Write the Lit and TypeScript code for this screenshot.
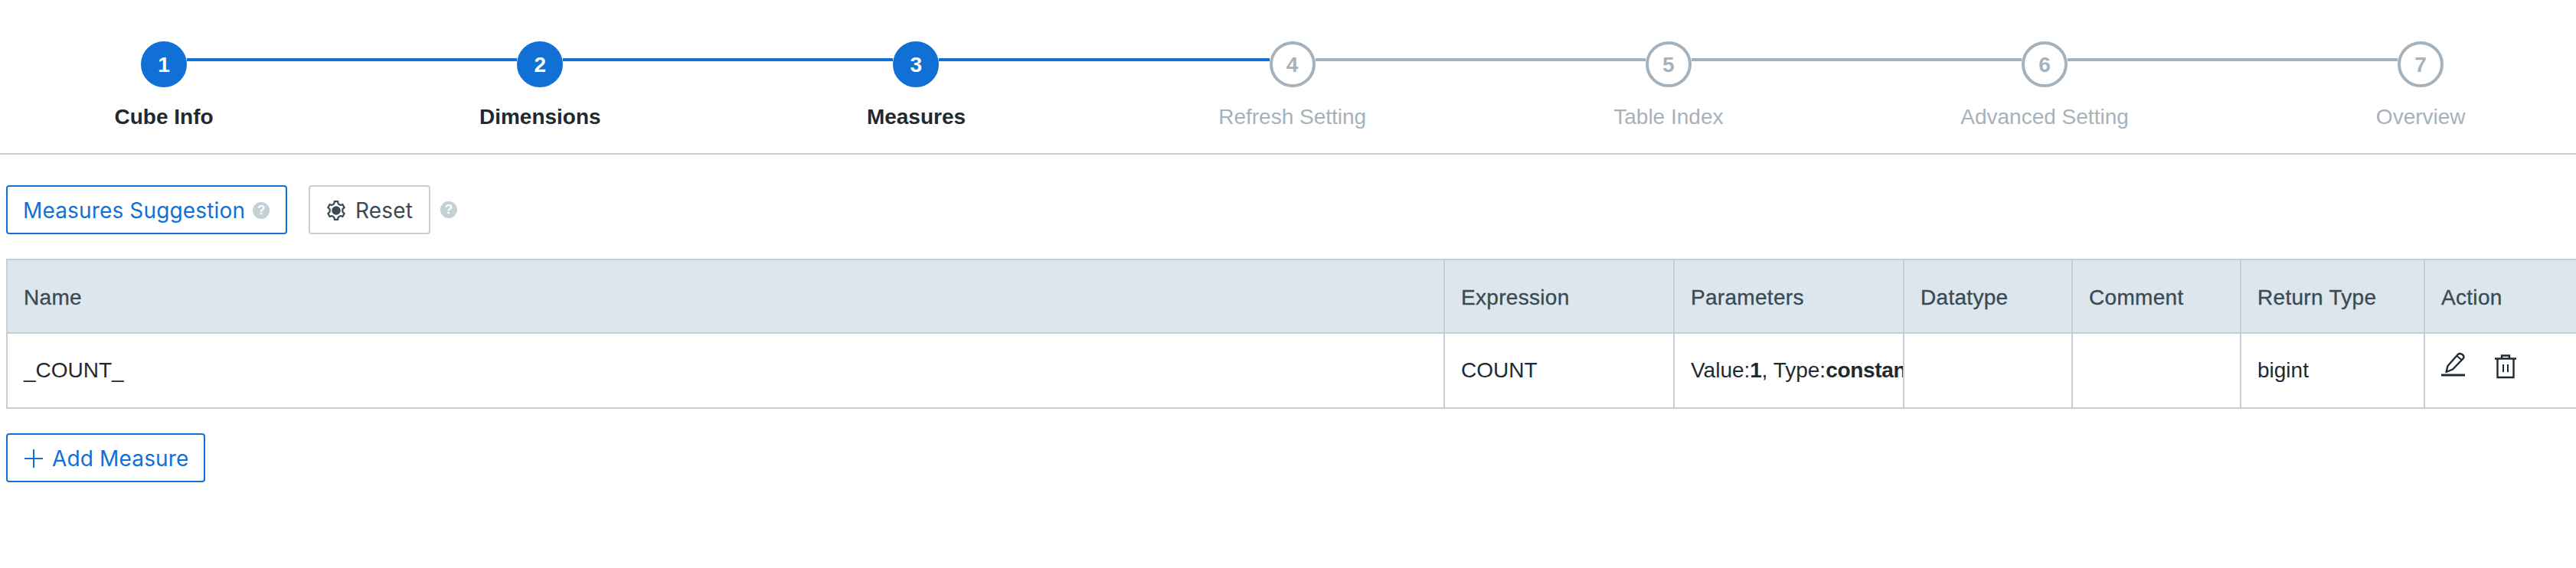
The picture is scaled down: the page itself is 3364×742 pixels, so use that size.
import { LitElement, html, css, svg } from "lit";
import { customElement } from "lit/decorators.js";

const steps = [
  "Cube Info",
  "Dimensions",
  "Measures",
  "Refresh Setting",
  "Table Index",
  "Advanced Setting",
  "Overview",
];
const activeCount = 3;

const columns = ["Name", "Expression", "Parameters", "Datatype", "Comment", "Return Type", "Action"];

// cog outline used by the Reset button, six teeth
function gearPath() {
  const pts: string[] = [];
  const teeth = 6;
  for (let i = 0; i < teeth; i++) {
    const a = (i / teeth) * Math.PI * 2 - Math.PI / 2;
    const offs: [number, number][] = [
      [-0.3, 9.6],
      [-0.2, 12.2],
      [0.2, 12.2],
      [0.3, 9.6],
      [Math.PI / 6, 9],
    ];
    for (const [o, r] of offs) {
      pts.push(`${(13 + Math.cos(a + o) * r * 0.92).toFixed(2)} ${(13 + Math.sin(a + o) * r).toFixed(2)}`);
    }
  }
  return "M" + pts.join("L") + "Z";
}

@customElement("app-root")
export class AppRoot extends LitElement {
  static styles = css`
    :host {
      display: block;
      width: 100%;
      min-height: 742px;
      background: #fff;
      overflow: hidden;
      font-family: "Liberation Sans", Arial, sans-serif;
      font-size: 28px;
      color: #1f2a30;
    }

    .stepper {
      height: 200px;
      border-bottom: 2px solid #c5d0d3;
      overflow: hidden;
    }

    .track {
      display: flex;
      align-items: flex-start;
      padding: 54px 0 0 184px;
    }

    .circle {
      flex: none;
      width: 60px;
      height: 60px;
      box-sizing: border-box;
      border-radius: 50%;
      border: 4px solid #a5b2bc;
      color: #a5b2bc;
      background: #fff;
      font-weight: bold;
      line-height: 1;
      padding-top: 2px;
      display: flex;
      align-items: center;
      justify-content: center;
    }

    .circle.on {
      background: #1170d6;
      border-color: #1170d6;
      color: #fff;
    }

    .link {
      flex: none;
      width: 431.2px;
      height: 4px;
      margin-top: 22px;
      background: #a5b2bc;
    }

    .link.on {
      background: #1170d6;
    }

    .labels {
      display: grid;
      grid-template-columns: repeat(7, 491.2px);
      margin: 23px 0 0 -31.5px;
    }

    .label {
      text-align: center;
      line-height: 32px;
      color: #a5b2bc;
      white-space: nowrap;
    }

    .label.on {
      color: #1f2a30;
      font-weight: bold;
    }

    .toolbar {
      display: flex;
      align-items: center;
      padding: 40px 0 0 8px;
    }

    .btn {
      display: inline-flex;
      align-items: center;
      height: 64px;
      box-sizing: border-box;
      border: 2px solid #1170d6;
      border-radius: 4px;
      background: #fff;
      color: #1170d6;
      font-family: Inter, "Liberation Sans", sans-serif;
      font-size: 28px;
      letter-spacing: 0.15px;
      padding: 1px 21px 0 20px;
      white-space: nowrap;
    }

    .btn.plain {
      border-color: #c5d0d6;
      color: #394a54;
      margin-left: 28px;
      padding: 1px 21px 0 21px;
      gap: 12px;
    }

    .help {
      flex: none;
      width: 22px;
      height: 22px;
      border-radius: 50%;
      background: #c5d0d6;
      color: #fff;
      font: bold 17px/22px "Liberation Sans", sans-serif;
      letter-spacing: 0;
      text-align: center;
      margin-left: 10px;
    }

    .toolbar > .help {
      margin-left: 13px;
    }

    .grid {
      margin: 32px 0 0 8px;
      width: 3400px;
      table-layout: fixed;
      border-collapse: separate;
      border-spacing: 0;
      border-top: 2px solid #c5d0d6;
      border-left: 2px solid #c5d0d6;
    }

    th,
    td {
      box-sizing: border-box;
      padding: 0 20px 0 21px;
      text-align: left;
      white-space: nowrap;
      overflow: hidden;
      border-right: 2px solid #c5d0d6;
      border-bottom: 2px solid #c5d0d6;
    }

    th {
      height: 96px;
      padding-top: 3px;
      background: #dce6ec;
      color: #394a54;
      font-weight: normal;
      letter-spacing: 0.3px;
      -webkit-text-stroke: 0.3px #394a54;
    }

    td {
      height: 98px;
      padding-right: 0;
    }

    td b {
      letter-spacing: -0.3px;
    }

    .actions {
      display: flex;
      align-items: flex-start;
      gap: 35px;
      padding-bottom: 13px;
    }

    .actions svg {
      display: block;
      fill: none;
      stroke: #1f2a30;
    }

    .actions .trash {
      margin-top: 3px;
    }

    .add {
      margin: 32px 0 0 8px;
      padding: 1px 20px 0 21px;
      gap: 11px;
    }
  `;

  render() {
    return html`
      <div class="stepper">
        <div class="track">
          ${steps.map(
            (_, i) => html`
              <div class="circle ${i < activeCount ? "on" : ""}">${i + 1}</div>
              ${i < steps.length - 1
                ? html`<div class="link ${i < activeCount ? "on" : ""}"></div>`
                : ""}
            `
          )}
        </div>
        <div class="labels">
          ${steps.map((s, i) => html`<div class="label ${i < activeCount ? "on" : ""}">${s}</div>`)}
        </div>
      </div>

      <div class="toolbar">
        <button class="btn">Measures Suggestion<span class="help">?</span></button>
        <button class="btn plain">
          <svg width="26" height="26" viewBox="0 0 26 26">
            <path d=${gearPath()} fill="none" stroke="#394a54" stroke-width="2.2" stroke-linejoin="round"></path>
            <circle cx="13" cy="13" r="5.8" fill="#394a54"></circle>
          </svg>
          Reset
        </button>
        <span class="help">?</span>
      </div>

      <table class="grid">
        <colgroup>
          <col style="width:1877px" />
          <col style="width:300px" />
          <col style="width:300px" />
          <col style="width:220px" />
          <col style="width:220px" />
          <col style="width:240px" />
          <col />
        </colgroup>
        <thead>
          <tr>${columns.map((c) => html`<th>${c}</th>`)}</tr>
        </thead>
        <tbody>
          <tr>
            <td>_COUNT_</td>
            <td>COUNT</td>
            <td>Value:<b>1</b>, Type:<b>constant</b></td>
            <td></td>
            <td></td>
            <td>bigint</td>
            <td>
              <div class="actions">
                <svg width="34" height="32" viewBox="0 0 34 32">
                  ${svg`
                    <path d="M6.5 26 L8.5 18 L22 2.8 Q24 1 27.5 3 Q30.5 5.5 29 8 L15 22.5 Z" stroke-width="2.4" stroke-linejoin="round"></path>
                    <path d="M20.5 5 L27 10.5" stroke-width="2"></path>
                    <path d="M0 30 H31" stroke-width="3"></path>
                  `}
                </svg>
                <svg class="trash" width="30" height="32" viewBox="0 0 30 32">
                  ${svg`
                    <path d="M1 5.5 H29 M10 5 V1.5 H20 V5 M4.5 6 V30 H25.5 V6" stroke-width="2.4"></path>
                    <path d="M12 13 V23 M18 13 V23" stroke-width="2"></path>
                  `}
                </svg>
              </div>
            </td>
          </tr>
        </tbody>
      </table>

      <button class="btn add">
        <svg width="26" height="26" viewBox="0 0 26 26" fill="none" stroke="#1170d6" stroke-width="2">
          <path d="M13 1 V25 M1 13 H25"></path>
        </svg>
        Add Measure
      </button>
    `;
  }
}
